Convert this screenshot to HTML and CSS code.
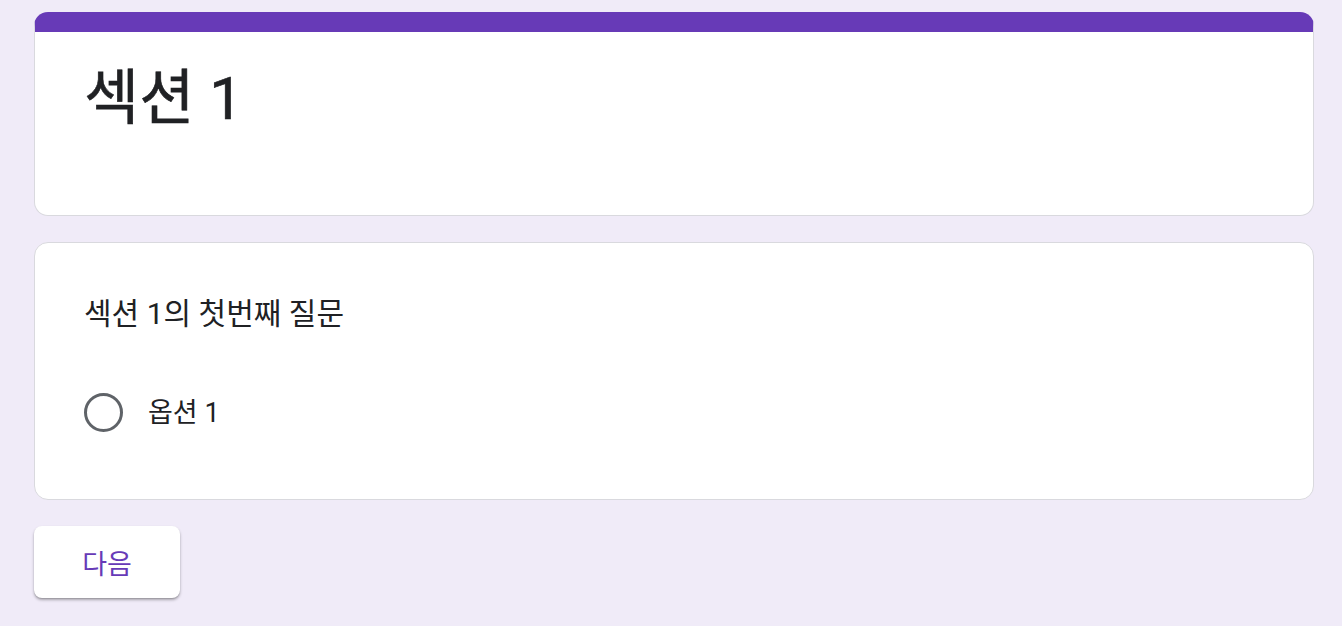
FILE: index.html
```html
<!DOCTYPE html>
<html lang="ko">
<head>
<meta charset="utf-8">
<title>섹션 1</title>
<link rel="stylesheet" href="styles.css">
</head>
<body>
<main class="form">
  <section class="card header-card">
    <h1 class="title">섹션 1</h1>
  </section>
  <section class="card question-card">
    <div class="question">섹션 1의 첫번째 질문</div>
    <label class="option">
      <span class="radio"></span>
      <span class="option-label">옵션 1</span>
    </label>
  </section>
  <div class="actions">
    <button class="next-btn" type="button">다음</button>
  </div>
</main>
</body>
</html>
```

FILE: styles.css
```css
html, body {
  margin: 0;
  padding: 0;
}
body {
  background: #f0ebf8;
  font-family: Roboto, "Noto Sans CJK KR", sans-serif;
  color: #202124;
  height: 626px;
  overflow: hidden;
}
.form {
  box-sizing: border-box;
  width: 1280px;
  margin-left: 34px;
  padding-top: 12px;
  display: flex;
  flex-direction: column;
  gap: 26px;
}
.card {
  box-sizing: border-box;
  background: #fff;
  border: 1.5px solid #d9d9de;
  border-radius: 14px;
}
.header-card {
  height: 204px;
  border-top: 20px solid #673ab7;
  padding: 29px 49px 0;
}
.title {
  margin: 0;
  font-size: 60px;
  font-weight: 400;
  line-height: 76px;
  letter-spacing: 0;
  -webkit-text-stroke: 0.6px #202124;
}
.question-card {
  height: 258px;
  padding: 52px 49px 0;
  display: flex;
  flex-direction: column;
}
.question {
  font-size: 30px;
  line-height: 38px;
  font-weight: 400;
}
.option {
  margin-top: 60px;
  display: flex;
  align-items: center;
  gap: 25px;
}
.radio {
  box-sizing: border-box;
  width: 39px;
  height: 39px;
  border: 3.5px solid #5f6368;
  border-radius: 50%;
  flex: none;
}
.option-label {
  font-size: 27px;
  line-height: 36px;
}
.actions {
  display: flex;
}
.next-btn {
  width: 146px;
  height: 72px;
  padding: 0;
  border: none;
  border-radius: 8px;
  background: #fff;
  color: #673ab7;
  font-family: Roboto, "Noto Sans CJK KR", sans-serif;
  font-size: 27px;
  font-weight: 400;
  box-shadow: 0 2px 3px rgba(0, 0, 0, 0.3), 0 1px 1px rgba(0, 0, 0, 0.1);
  cursor: pointer;
}
```
